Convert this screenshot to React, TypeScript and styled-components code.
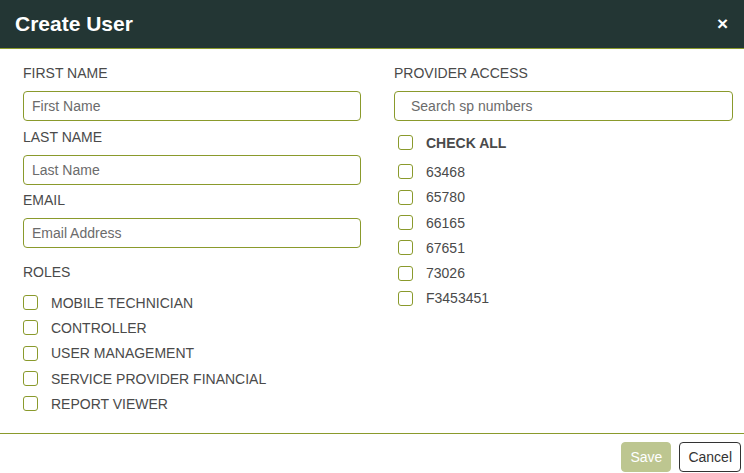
import React from "react";
import styled, { createGlobalStyle } from "styled-components";

const GlobalStyle = createGlobalStyle`
  html, body {
    margin: 0;
    padding: 0;
    background: #ffffff;
  }
  * {
    box-sizing: border-box;
  }
  body {
    font-family: "Liberation Sans", Arial, sans-serif;
  }
`;

const olive = "#8a9a2c";

const Modal = styled.div`
  width: 744px;
  height: 473px;
  display: flex;
  flex-direction: column;
  background: #ffffff;
`;

const Header = styled.div`
  height: 49px;
  flex-shrink: 0;
  background: #233634;
  border-bottom: 1px solid ${olive};
  display: flex;
  align-items: center;
  justify-content: space-between;
  padding: 0 16px 1px 15px;
`;

const Title = styled.h1`
  margin: 0;
  font-size: 21px;
  font-weight: 700;
  color: #ffffff;
`;

const CloseButton = styled.button`
  border: none;
  background: transparent;
  color: #ffffff;
  font-family: "Liberation Sans", Arial, sans-serif;
  font-size: 19px;
  font-weight: 700;
  line-height: 1;
  padding: 0;
  cursor: pointer;
`;

const Body = styled.div`
  flex: 1;
  display: grid;
  grid-template-columns: 338px 339px;
  column-gap: 33px;
  padding: 14px 11px 0 23px;
`;

const Column = styled.div`
  display: flex;
  flex-direction: column;
`;

const Field = styled.div<{ $gap?: number }>`
  display: flex;
  flex-direction: column;
  margin-bottom: ${({ $gap }) => $gap ?? 5.5}px;
`;

const Label = styled.label`
  font-size: 14px;
  line-height: 20px;
  color: #4a4a4a;
  text-transform: uppercase;
  margin-bottom: 8px;
`;

const Input = styled.input<{ $wide?: boolean }>`
  height: 30px;
  width: 100%;
  border: 1px solid ${olive};
  border-radius: 4px;
  padding: 0 ${({ $wide }) => ($wide ? 16 : 8)}px;
  font-family: "Liberation Sans", Arial, sans-serif;
  font-size: 14px;
  color: #333;
  outline: none;

  &::placeholder {
    color: #6b6b6b;
  }
`;

const CheckList = styled.div<{ $indent?: number }>`
  display: flex;
  flex-direction: column;
  padding-left: ${({ $indent }) => $indent ?? 0}px;
`;

const CheckRow = styled.label<{ $bold?: boolean; $space?: number }>`
  display: flex;
  align-items: center;
  gap: 13px;
  height: 25.3px;
  margin-bottom: ${({ $space }) => $space ?? 0}px;
  font-size: 14px;
  font-weight: ${({ $bold }) => ($bold ? 700 : 400)};
  color: #4a4a4a;
  cursor: pointer;
`;

const Box = styled.span`
  width: 15px;
  height: 15px;
  flex-shrink: 0;
  border: 1.5px solid ${olive};
  border-radius: 3px;
  background: #ffffff;
`;

const Footer = styled.div`
  flex-shrink: 0;
  border-top: 1px solid ${olive};
  display: flex;
  justify-content: flex-end;
  gap: 8px;
  padding: 8px 3px 1px;
`;

const Button = styled.button<{ $primary?: boolean }>`
  height: 30px;
  padding: 0 8px;
  border-radius: 4px;
  font-family: "Liberation Sans", Arial, sans-serif;
  font-size: 14px;
  border: 1px solid ${({ $primary }) => ($primary ? "#bdc690" : "#333333")};
  background: ${({ $primary }) => ($primary ? "#bdc690" : "#ffffff")};
  color: ${({ $primary }) => ($primary ? "#ffffff" : "#333333")};
  cursor: pointer;
`;

const roles = [
  "Mobile Technician",
  "Controller",
  "User Management",
  "Service Provider Financial",
  "Report Viewer",
];

const providers = ["63468", "65780", "66165", "67651", "73026", "F3453451"];

export default function App() {
  return (
    <>
      <GlobalStyle />
      <Modal>
        <Header>
          <Title>Create User</Title>
          <CloseButton aria-label="Close">×</CloseButton>
        </Header>

        <Body>
          <Column>
            <Field>
              <Label>First Name</Label>
              <Input placeholder="First Name" />
            </Field>
            <Field>
              <Label>Last Name</Label>
              <Input placeholder="Last Name" />
            </Field>
            <Field $gap={14}>
              <Label>Email</Label>
              <Input placeholder="Email Address" />
            </Field>
            <Field $gap={0}>
              <Label>Roles</Label>
              <CheckList>
                {roles.map((role) => (
                  <CheckRow key={role}>
                    <Box />
                    {role.toUpperCase()}
                  </CheckRow>
                ))}
              </CheckList>
            </Field>
          </Column>

          <Column>
            <Field $gap={9}>
              <Label>Provider Access</Label>
              <Input $wide placeholder="Search sp numbers" />
            </Field>
            <CheckList $indent={4}>
              <CheckRow $bold $space={4}>
                <Box />
                CHECK ALL
              </CheckRow>
              {providers.map((sp) => (
                <CheckRow key={sp}>
                  <Box />
                  {sp}
                </CheckRow>
              ))}
            </CheckList>
          </Column>
        </Body>

        <Footer>
          <Button $primary>Save</Button>
          <Button>Cancel</Button>
        </Footer>
      </Modal>
    </>
  );
}
